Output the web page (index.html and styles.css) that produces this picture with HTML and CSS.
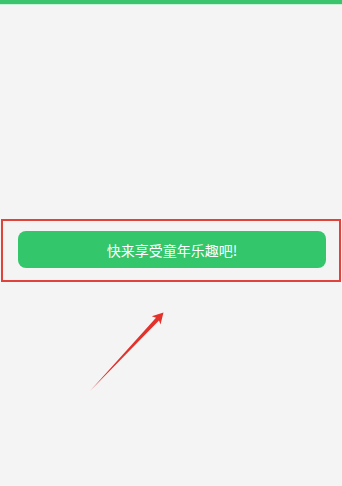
FILE: index.html
```html
<!DOCTYPE html>
<html lang="zh-CN">
<head>
  <meta charset="UTF-8" />
  <meta name="viewport" content="width=device-width, initial-scale=1.0" />
  <title>童年乐趣</title>
  <link rel="stylesheet" href="styles.css">
</head>
<body>
  <div class="top-bar"></div>
  <main>
    <div class="highlight">
      <button class="start-btn" type="button">快来享受童年乐趣吧!</button>
    </div>
  </main>

  <svg class="arrow" width="342" height="486" viewBox="0 0 342 486">
    <polygon fill="#e3312c" points="90,391 156,317.8 151.8,316.2 163.5,312.5 160.5,324.4 159,320.6" />
  </svg>
</body>
</html>
```

FILE: styles.css
```css
html, body {
  height: 100%;
}
body {
  font-family: "Noto Sans CJK SC", "Noto Sans", sans-serif;
  margin: 0;
  padding: 0;
  background: #f4f4f4;
  position: relative;
  overflow: hidden;
}
.top-bar {
  height: 4px;
  background: #3cc46c;
  border-bottom: 1px solid #c9f1d6;
}
main {
  padding-top: 214px;
}
.highlight {
  box-sizing: border-box;
  margin-left: 1px;
  width: 340px;
  height: 63px;
  border: 2px solid #e0433c;
  padding: 10px 12px 0 15px;
}
.start-btn {
  display: block;
  width: 308px;
  height: 37px;
  border: none;
  border-radius: 8px;
  background: #33c66a;
  color: #fff;
  font-family: inherit;
  font-size: 14px;
  padding: 0;
  cursor: pointer;
}
.arrow {
  position: absolute;
  top: 0;
  left: 0;
  pointer-events: none;
}
```
